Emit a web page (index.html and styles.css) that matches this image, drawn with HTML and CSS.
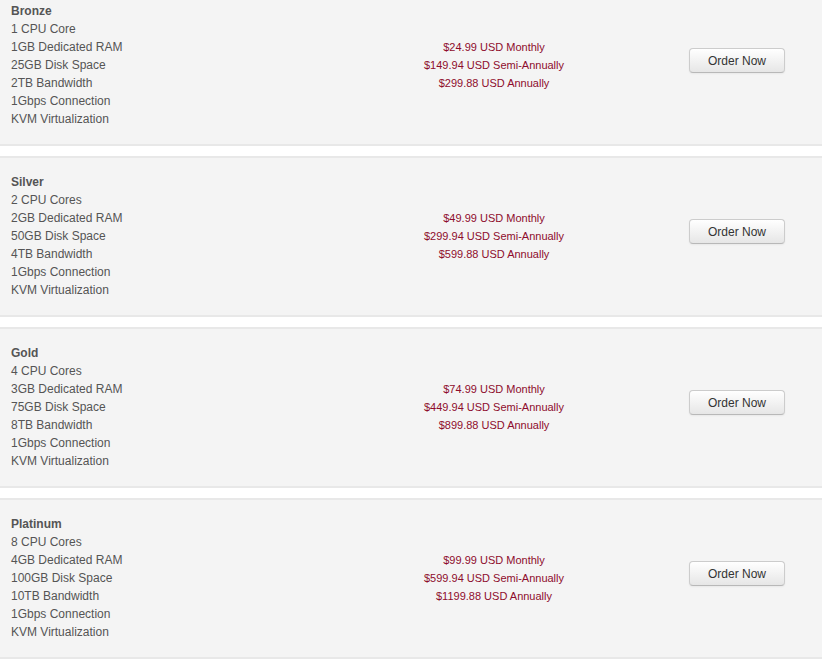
FILE: index.html
```html
<!DOCTYPE html>
<html lang="en">
<head>
  <meta charset="UTF-8">
  <title>Order</title>
  <link rel="stylesheet" href="styles.css">
</head>
<body>
  <div class="products">
    <div class="product">
      <div class="details">
        <strong>Bronze</strong>
        1 CPU Core<br>
        1GB Dedicated RAM<br>
        25GB Disk Space<br>
        2TB Bandwidth<br>
        1Gbps Connection<br>
        KVM Virtualization
      </div>
      <div class="pricing">
        $24.99 USD Monthly<br>
        $149.94 USD Semi-Annually<br>
        $299.88 USD Annually
      </div>
      <div class="order">
        <button class="btn">Order Now</button>
      </div>
    </div>
    <div class="product">
      <div class="details">
        <strong>Silver</strong>
        2 CPU Cores<br>
        2GB Dedicated RAM<br>
        50GB Disk Space<br>
        4TB Bandwidth<br>
        1Gbps Connection<br>
        KVM Virtualization
      </div>
      <div class="pricing">
        $49.99 USD Monthly<br>
        $299.94 USD Semi-Annually<br>
        $599.88 USD Annually
      </div>
      <div class="order">
        <button class="btn">Order Now</button>
      </div>
    </div>
    <div class="product">
      <div class="details">
        <strong>Gold</strong>
        4 CPU Cores<br>
        3GB Dedicated RAM<br>
        75GB Disk Space<br>
        8TB Bandwidth<br>
        1Gbps Connection<br>
        KVM Virtualization
      </div>
      <div class="pricing">
        $74.99 USD Monthly<br>
        $449.94 USD Semi-Annually<br>
        $899.88 USD Annually
      </div>
      <div class="order">
        <button class="btn">Order Now</button>
      </div>
    </div>
    <div class="product">
      <div class="details">
        <strong>Platinum</strong>
        8 CPU Cores<br>
        4GB Dedicated RAM<br>
        100GB Disk Space<br>
        10TB Bandwidth<br>
        1Gbps Connection<br>
        KVM Virtualization
      </div>
      <div class="pricing">
        $99.99 USD Monthly<br>
        $599.94 USD Semi-Annually<br>
        $1199.88 USD Annually
      </div>
      <div class="order">
        <button class="btn">Order Now</button>
      </div>
    </div>
  </div>
</body>
</html>
```

FILE: styles.css
```css
body {
  font-family: 'Liberation Sans', Arial, sans-serif;
  font-size: 12px;
  line-height: 18px;
  color: #555;
  background-color: #fff;
  margin: 0;
}
.products {
  margin-top: -15px;
}
.product {
  display: grid;
  grid-template-columns: 325px 316px 1fr;
  align-items: center;
  background-color: #f4f4f4;
  border-top: 2px solid #e8e8e8;
  border-bottom: 2px solid #e8e8e8;
  padding: 15px 0 16px 11px;
  margin-bottom: 10px;
}
.details strong {
  display: block;
}
.pricing {
  text-align: center;
  font-size: 11px;
  color: #8e0c2c;
}
.order {
  text-align: center;
  padding-bottom: 9px;
}
/* Bootstrap style button */
.btn {
  font-family: 'Liberation Sans', Arial, sans-serif;
  font-size: 12px;
  line-height: 18px;
  color: #333;
  width: 96px;
  height: 25px;
  padding: 3px 0;
  border: 1px solid #ccc;
  border-bottom-color: #b8b8b8;
  border-radius: 4px;
  background-color: #f5f5f5;
  background-image: linear-gradient(to bottom, #fff, #e6e6e6);
  box-shadow: inset 0 1px 0 rgba(255,255,255,0.2), 0 1px 2px rgba(0,0,0,0.05);
  cursor: pointer;
}
```
